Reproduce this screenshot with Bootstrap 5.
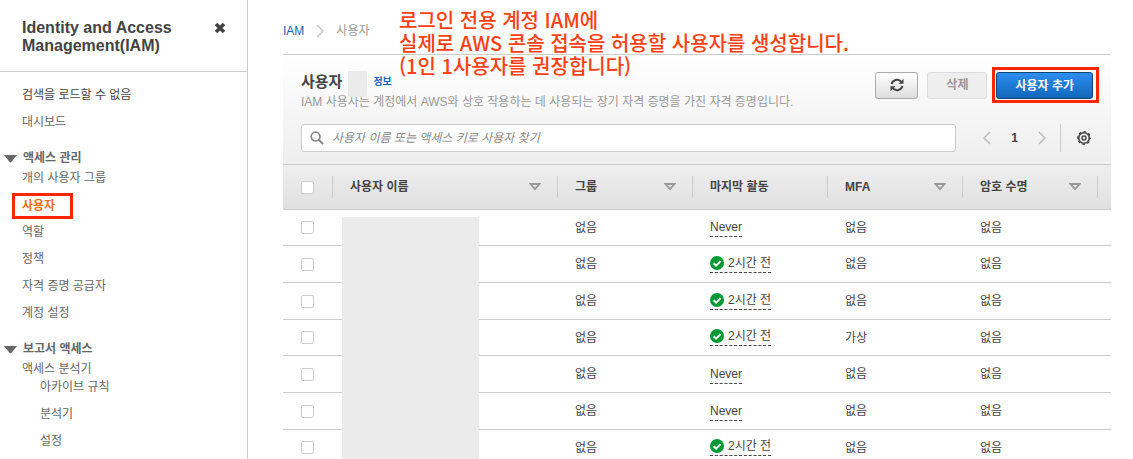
<!DOCTYPE html>
<html lang="ko">
<head>
<meta charset="utf-8">
<meta name="viewport" content="width=device-width, initial-scale=1">
<title>IAM 사용자</title>
<link href="https://cdn.jsdelivr.net/npm/bootstrap@5.3.0/dist/css/bootstrap.min.css" rel="stylesheet">
<style>
  body { font-family: "Liberation Sans", "Noto Sans CJK KR", sans-serif; font-size: 12px; line-height: 18px; color: #444; }
  a { text-decoration: none; color: inherit; }

  /* Side navigation */
  .side-nav { width: 248px; border-right: 1px solid #ccc; color: #666; }
  .side-head { padding: 19px 18px 16px 22px; border-bottom: 1px solid #ccc; }
  .side-head h1 { font-size: 16px; line-height: 18px; font-weight: 700; color: #444; }
  .close-btn { width: 18px; height: 18px; }
  .nav-items { padding-left: 22px; line-height: 27px; }
  .nav-first { padding-top: 10px; }
  .nav-first li:first-child { color: #444; }
  .nav-items .nested { padding-left: 18px; margin-top: -9px; }
  .nav-title { margin: 16px 0 0 4px; gap: 6px; font-size: 12px; line-height: 13px; font-weight: 700; }
  .current-page { margin-left: -10px; padding: 0 15px 0 7px; border: 3px solid #ff2600; line-height: 20px; font-weight: 700; color: #ec7211; }

  /* Main area */
  .content { padding: 0 22px 0 35px; }
  .crumbs { height: 54px; padding-top: 7px; gap: 12px; color: #999; }
  .blue-link { color: #1166bb; }
  .note { left: 399px; top: 8px; font-size: 20px; line-height: 23px; font-weight: 500; color: #ff4013; font-family: "Noto Sans CJK KR", sans-serif; }
  .tool-panel { padding: 12px 12px 12px 18px; border-top: 1px solid #ccc; background: linear-gradient(#fff, #eee); }
  .tool-panel h2 { font-size: 15px; line-height: 22px; font-weight: 700; }
  .masked { background: #ebebeb; }
  .mask-count { width: 19px; height: 26px; left: 47px; top: 0; }
  .info-link { font-size: 10px; font-weight: 700; margin-left: 31px; }
  .desc { color: #999; }
  .tool-actions { gap: 9px; }
  .tool-btn { height: 27px; border-radius: 3px; font-size: 12px; line-height: 18px; font-weight: 700; padding: 0 18px; border: 1px solid #aaa; color: #444; background: linear-gradient(#fff, #ddd); }
  .btn-refresh { width: 43px; padding: 0; }
  .tool-btn:disabled { color: #999; border-color: #ddd; background: #eee; opacity: 1; }
  .tool-btn.primary { color: #fff; border-color: #0c457c; background: linear-gradient(#2e8df0, #1166bb); }
  .callout-box { border: 3px solid #ff2600; padding: 2px 3px 1px 1px; margin-left: -4px; }
  .search-row { margin-top: 13px; }
  .search-box { height: 28px; margin-right: 27px; border: 1px solid #ccc; border-radius: 3px; background: #fff; padding-left: 8px; gap: 8px; }
  .search-box input { font-size: 12px; color: #444; }
  .search-box input::placeholder { color: #888; font-style: italic; opacity: 1; }
  .pager { gap: 20px; font-weight: 700; }
  .settings { height: 28px; border-left: 1px solid #ccc; margin-left: 14px; padding: 0 8px 0 16px; }

  /* User table */
  .user-table { table-layout: fixed; }
  .user-table th { height: 45px; padding: 0; font-weight: 700; border-top: 1px solid #ccc; border-bottom: 1px solid #ccc; }
  .user-table thead { background: linear-gradient(#eee, #e0e0e0); }
  .head-cell { height: 22px; padding: 0 16px 0 17px; border-right: 1px solid #ccc; }
  .user-table td { height: 37px; padding: 0 17px; border-bottom: 1px solid #ccc; }
  .user-table tbody tr:nth-child(3n+1) td { height: 36px; }
  .user-table td:first-child, .user-table th:first-child .head-cell { padding-left: 18px; }
  .col-check { width: 50px; }
  .col-data { width: 135px; }
  .col-end { width: 13px; }
  .user-table input { width: 13px; height: 13px; appearance: none; border: 1px solid #ccc; border-radius: 2px; background: #fff; margin: 0; }
  .activity { gap: 4px; border-bottom: 1px dashed #444; }
  .mask-names { left: 59px; top: 53px; bottom: 0; width: 137px; }
</style>
</head>
<body>
<svg class="d-none" aria-hidden="true">
  <symbol id="sort" viewBox="0 0 12 8"><path d="M1.5 1h9L6 6.2z" fill="none" stroke="#999" stroke-width="1.8"/></symbol>
  <symbol id="open" viewBox="0 0 13 8"><path d="M0 0h13L7.3 7q-.8.8-1.6 0z" fill="#666"/></symbol>
  <symbol id="ok" viewBox="0 0 14 14"><circle cx="7" cy="7" r="7" fill="#093"/><path d="M3.6 7.2l2.5 2.5 4.5-4.6" fill="none" stroke="#fff" stroke-width="2"/></symbol>
</svg>
<div class="d-flex vh-100 overflow-hidden position-relative">
  <nav class="side-nav flex-shrink-0" aria-label="IAM">
    <div class="side-head d-flex justify-content-between align-items-start">
      <h1 class="m-0">Identity and Access<br>Management(IAM)</h1>
      <button type="button" class="close-btn btn p-0 border-0 d-flex align-items-center justify-content-center" aria-label="닫기">
        <svg width="12" height="12" viewBox="0 0 12 12"><path d="M2 2l8 8M10 2l-8 8" stroke="#444" stroke-width="3.6"/></svg>
      </button>
    </div>
    <ul class="nav-items nav-first list-unstyled m-0">
      <li>검색을 로드할 수 없음</li>
      <li><a href="#">대시보드</a></li>
    </ul>
    <h2 class="nav-title d-flex align-items-center mb-0"><svg width="13" height="8"><use href="#open"/></svg>액세스 관리</h2>
    <ul class="nav-items list-unstyled m-0">
      <li><a href="#">개의 사용자 그룹</a></li>
      <li><a href="#" class="current-page d-inline-block align-middle" aria-current="page">사용자</a></li>
      <li><a href="#">역할</a></li>
      <li><a href="#">정책</a></li>
      <li><a href="#">자격 증명 공급자</a></li>
      <li><a href="#">계정 설정</a></li>
    </ul>
    <h2 class="nav-title d-flex align-items-center mb-0"><svg width="13" height="8"><use href="#open"/></svg>보고서 액세스</h2>
    <ul class="nav-items list-unstyled m-0">
      <li><a href="#">액세스 분석기</a>
        <ul class="nested list-unstyled">
          <li><a href="#">아카이브 규칙</a></li>
          <li><a href="#">분석기</a></li>
          <li><a href="#">설정</a></li>
        </ul>
      </li>
    </ul>
  </nav>

  <main class="content flex-grow-1">
    <nav class="crumbs d-flex align-items-center" aria-label="breadcrumb">
      <a href="#" class="blue-link">IAM</a>
      <svg width="8" height="14" viewBox="0 0 8 14"><path d="M1 1l6 6-6 6" fill="none" stroke="#ccc" stroke-width="1.6"/></svg>
      <span>사용자</span>
    </nav>

    <section class="tool-panel">
      <div class="d-flex align-items-start">
        <div class="flex-grow-1 position-relative pt-1">
          <div class="d-flex align-items-center">
            <h2 class="m-0">사용자</h2>
            <a href="#" class="info-link blue-link">정보</a>
          </div>
          <p class="desc m-0">IAM 사용자는 계정에서 AWS와 상호 작용하는 데 사용되는 장기 자격 증명을 가진 자격 증명입니다.</p>
          <span class="masked mask-count position-absolute mt-1"></span>
        </div>
        <div class="tool-actions d-flex align-items-center">
          <button type="button" class="tool-btn btn-refresh d-flex align-items-center justify-content-center" aria-label="새로 고침">
            <svg width="14" height="14" viewBox="0 0 14 14"><path d="M1.6 6A5.5 5.5 0 0 1 11 3.6M12.4 8A5.5 5.5 0 0 1 3 10.4" fill="none" stroke="#444" stroke-width="2"/><path d="M13.5.8v5h-5zM.5 13.2v-5h5z" fill="#444"/></svg>
          </button>
          <button type="button" class="tool-btn" disabled>삭제</button>
          <div class="callout-box">
            <button type="button" class="tool-btn primary d-block">사용자 추가</button>
          </div>
        </div>
      </div>
      <div class="search-row d-flex align-items-center">
        <label class="search-box d-flex align-items-center flex-grow-1">
          <svg width="14" height="14" viewBox="0 0 14 14"><circle cx="5.6" cy="5.6" r="4.4" fill="none" stroke="#888" stroke-width="1.7"/><path d="M8.8 8.8l4.2 4.2" stroke="#888" stroke-width="2"/></svg>
          <input type="text" class="border-0 p-0 flex-grow-1 bg-transparent" placeholder="사용자 이름 또는 액세스 키로 사용자 찾기" aria-label="사용자 찾기">
        </label>
        <div class="pager d-flex align-items-center">
          <button type="button" class="btn p-0 border-0 d-flex" aria-label="이전"><svg width="8" height="14" viewBox="0 0 8 14"><path d="M7 1L1 7l6 6" fill="none" stroke="#bbb" stroke-width="1.5"/></svg></button>
          <span>1</span>
          <button type="button" class="btn p-0 border-0 d-flex" aria-label="다음"><svg width="8" height="14" viewBox="0 0 8 14"><path d="M1 1l6 6-6 6" fill="none" stroke="#bbb" stroke-width="1.5"/></svg></button>
        </div>
        <div class="settings d-flex align-items-center">
          <button type="button" class="btn p-0 border-0 d-flex" aria-label="설정">
            <svg width="14" height="14" viewBox="0 0 14 14" fill="none" stroke="#444"><circle cx="7" cy="7" r="5.3" stroke-width="1.6"/><circle cx="7" cy="7" r="6.3" stroke-width="1.2" stroke-dasharray="2.6 2.35" stroke-dashoffset="1.3"/><circle cx="7" cy="7" r="2" stroke-width="1.4"/></svg>
          </button>
        </div>
      </div>
    </section>

    <div class="position-relative">
      <table class="user-table w-100">
        <colgroup><col class="col-check"><col><col class="col-data"><col class="col-data"><col class="col-data"><col class="col-data"><col class="col-end"></colgroup>
        <thead>
          <tr>
            <th><div class="head-cell d-flex align-items-center"><input type="checkbox" aria-label="모두 선택"></div></th>
            <th><div class="head-cell d-flex align-items-center justify-content-between">사용자 이름<svg width="12" height="8"><use href="#sort"/></svg></div></th>
            <th><div class="head-cell d-flex align-items-center justify-content-between">그룹<svg width="12" height="8"><use href="#sort"/></svg></div></th>
            <th><div class="head-cell d-flex align-items-center">마지막 활동</div></th>
            <th><div class="head-cell d-flex align-items-center justify-content-between">MFA<svg width="12" height="8"><use href="#sort"/></svg></div></th>
            <th><div class="head-cell d-flex align-items-center justify-content-between">암호 수명<svg width="12" height="8"><use href="#sort"/></svg></div></th>
            <th></th>
          </tr>
        </thead>
        <tbody>
          <tr><td><input type="checkbox" class="d-block" aria-label="사용자 1 선택"></td><td></td><td>없음</td><td><a href="#" class="activity d-inline-flex align-items-center">Never</a></td><td>없음</td><td>없음</td><td class="p-0"></td></tr>
          <tr><td><input type="checkbox" class="d-block" aria-label="사용자 2 선택"></td><td></td><td>없음</td><td><a href="#" class="activity d-inline-flex align-items-center"><svg width="14" height="14"><use href="#ok"/></svg>2시간 전</a></td><td>없음</td><td>없음</td><td class="p-0"></td></tr>
          <tr><td><input type="checkbox" class="d-block" aria-label="사용자 3 선택"></td><td></td><td>없음</td><td><a href="#" class="activity d-inline-flex align-items-center"><svg width="14" height="14"><use href="#ok"/></svg>2시간 전</a></td><td>없음</td><td>없음</td><td class="p-0"></td></tr>
          <tr><td><input type="checkbox" class="d-block" aria-label="사용자 4 선택"></td><td></td><td>없음</td><td><a href="#" class="activity d-inline-flex align-items-center"><svg width="14" height="14"><use href="#ok"/></svg>2시간 전</a></td><td>가상</td><td>없음</td><td class="p-0"></td></tr>
          <tr><td><input type="checkbox" class="d-block" aria-label="사용자 5 선택"></td><td></td><td>없음</td><td><a href="#" class="activity d-inline-flex align-items-center">Never</a></td><td>없음</td><td>없음</td><td class="p-0"></td></tr>
          <tr><td><input type="checkbox" class="d-block" aria-label="사용자 6 선택"></td><td></td><td>없음</td><td><a href="#" class="activity d-inline-flex align-items-center">Never</a></td><td>없음</td><td>없음</td><td class="p-0"></td></tr>
          <tr><td><input type="checkbox" class="d-block" aria-label="사용자 7 선택"></td><td></td><td>없음</td><td><a href="#" class="activity d-inline-flex align-items-center"><svg width="14" height="14"><use href="#ok"/></svg>2시간 전</a></td><td>없음</td><td>없음</td><td class="p-0"></td></tr>
        </tbody>
      </table>
      <div class="masked mask-names position-absolute"></div>
    </div>
  </main>

  <p class="note position-absolute m-0 text-nowrap">로그인 전용 계정 IAM에<br>실제로 AWS 콘솔 접속을 허용할 사용자를 생성합니다.<br>(1인 1사용자를 권장합니다)</p>
</div>
<script src="https://cdn.jsdelivr.net/npm/bootstrap@5.3.0/dist/js/bootstrap.bundle.min.js"></script>
</body>
</html>
